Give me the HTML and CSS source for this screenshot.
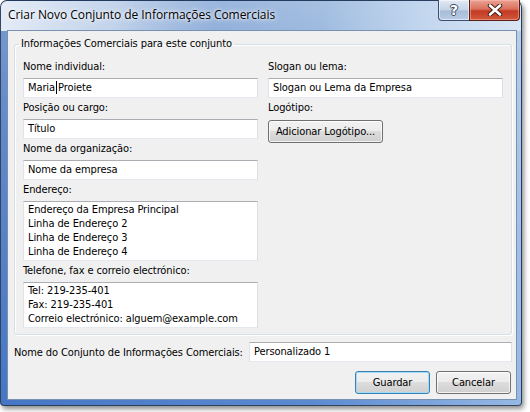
FILE: index.html
```html
<!DOCTYPE html>
<html lang="pt">
<head>
<meta charset="utf-8">
<title>Criar Novo Conjunto de Informações Comerciais</title>
<link rel="stylesheet" href="styles.css">
</head>
<body>
<div class="window">
  <div class="titlebar">
    <div class="title">Criar Novo Conjunto de Informações Comerciais</div>
    <div class="caption-buttons">
      <div class="cap-btn help"><span class="help-glyph">?</span></div>
      <div class="cap-btn close">
        <svg width="16" height="12" viewBox="0 0 16 12">
          <path d="M3 1.5 L13 10.5 M13 1.5 L3 10.5" stroke="#3a1a14" stroke-width="4.4" stroke-linecap="round"/>
          <path d="M3 1.5 L13 10.5 M13 1.5 L3 10.5" stroke="#ffffff" stroke-width="2.6" stroke-linecap="round"/>
        </svg>
      </div>
    </div>
  </div>
  <div class="client">
    <fieldset class="group">
      <legend class="group-title">Informações Comerciais para este conjunto</legend>
      <div class="form-grid">
        <div class="col">
          <div class="label first">Nome individual:</div>
          <div class="textbox">Maria<span class="caret"></span> Proiete</div>
          <div class="label">Posição ou cargo:</div>
          <div class="textbox">Título</div>
          <div class="label">Nome da organização:</div>
          <div class="textbox">Nome da empresa</div>
          <div class="label">Endereço:</div>
          <div class="textarea lines4">Endereço da Empresa Principal<br>Linha de Endereço 2<br>Linha de Endereço 3<br>Linha de Endereço 4</div>
          <div class="label">Telefone, fax e correio electrónico:</div>
          <div class="textarea lines3">Tel: 219-235-401<br>Fax: 219-235-401<br>Correio electrónico: alguem@example.com</div>
        </div>
        <div class="col">
          <div class="label first">Slogan ou lema:</div>
          <div class="textbox">Slogan ou Lema da Empresa</div>
          <div class="label">Logótipo:</div>
          <div class="button logo-btn">Adicionar Logótipo...</div>
        </div>
      </div>
    </fieldset>
    <div class="name-row">
      <div class="label-inline">Nome do Conjunto de Informações Comerciais:</div>
      <div class="textbox name-box">Personalizado 1</div>
    </div>
    <div class="actions">
      <div class="button default">Guardar</div>
      <div class="button">Cancelar</div>
    </div>
  </div>
</div>
</body>
</html>
```

FILE: styles.css
```css
html, body {
  margin: 0;
  padding: 0;
  background: #ffffff;
}
body {
  width: 530px;
  height: 412px;
  overflow: hidden;
  font-family: "DejaVu Sans Condensed", "Liberation Sans", sans-serif;
  font-size: 11px;
  letter-spacing: -0.1px;
  color: #000;
}
.window {
  box-sizing: border-box;
  width: 522px;
  height: 406px;
  border: 1px solid rgba(28, 46, 74, 0.85);
  border-radius: 7px 7px 4px 4px;
  box-shadow: 2px 3px 5px rgba(0, 0, 0, 0.45);
  display: flex;
  flex-direction: column;
  background:
    linear-gradient(100deg, rgba(235,241,249,0.95) 0%, rgba(210,223,240,0.8) 22%, rgba(110,150,205,0) 42%, rgba(130,165,215,0.1) 62%, rgba(205,222,242,0.8) 85%, rgba(222,233,246,0.85) 100%) top / 100% 30px no-repeat,
    linear-gradient(to right, rgba(30,80,175,0.35) 0%, rgba(30,80,175,0) 60%, rgba(200,222,245,0.55) 100%),
    linear-gradient(to bottom, #a9c2e2 0%, #86a9d8 30%, #5a8ad0 100%);
}
.titlebar {
  height: 29px;
  display: flex;
  align-items: flex-start;
  padding-left: 7px;
}
.title {
  font-family: "Open Sans", "Noto Sans", sans-serif;
  font-size: 12px;
  letter-spacing: -0.05px;
  line-height: 28px;
  color: #000;
  text-shadow: 0 0 6px #fff, 0 0 3px #fff;
}
.caption-buttons {
  margin-left: auto;
  margin-right: 1px;
  margin-top: -1px;
  display: flex;
}
.cap-btn {
  box-sizing: border-box;
  height: 21px;
  display: flex;
  align-items: center;
  justify-content: center;
  border: 1px solid #3c4f6e;
  border-top: none;
}
.help {
  width: 31px;
  border-radius: 0 0 0 4px;
  border-right: none;
  background: linear-gradient(to bottom, #e2eaf4 0%, #c4d3e6 50%, #a7bcd8 55%, #b9cce4 100%);
  box-shadow: inset 0 0 0 1px rgba(255,255,255,0.5);
}
.help-glyph {
  font-family: "DejaVu Sans", sans-serif;
  font-weight: bold;
  font-size: 14px;
  line-height: 14px;
  color: #fff;
  text-shadow: -1px 0 #3b4a62, 1px 0 #3b4a62, 0 -1px #3b4a62, 0 1px #3b4a62;
}
.close {
  width: 51px;
  border-radius: 0 0 4px 0;
  border-color: #5a1e16;
  background: linear-gradient(to bottom, #eba393 0%, #d9705c 45%, #c43a24 55%, #d0593c 100%);
  box-shadow: inset 0 0 0 1px rgba(255,200,190,0.45);
}
.client {
  box-sizing: border-box;
  flex: 1;
  margin: 0 4px 5px 6px;
  border: 1px solid #7890b2;
  background: #f0f0f0;
  padding: 6px 4px 0 6px;
  display: flex;
  flex-direction: column;
}
.group {
  margin: 0;
  padding: 0 8px 6px 8px;
  border: 1px solid #d5dfe5;
  border-radius: 3px;
  box-shadow: inset 1px 1px 0 #fff, 1px 1px 0 #fff;
  min-width: 0;
}
.group-title {
  margin-left: -4px;
  padding: 0 2px;
  line-height: 14px;
}
.form-grid {
  display: grid;
  grid-template-columns: 235px 235px;
  column-gap: 10px;
  padding-top: 9px;
}
.col {
  display: flex;
  flex-direction: column;
  align-items: flex-start;
}
.label {
  line-height: 14px;
  margin: 3px 0 4px;
  white-space: nowrap;
}
.label.first {
  margin-top: 0;
}
.textbox, .textarea {
  box-sizing: border-box;
  width: 235px;
  background: #fff;
  border: 1px solid;
  border-color: #abadb3 #dbdfe6 #e3e9ef #e2e3ea;
  padding: 0 4px;
  white-space: nowrap;
}
.textbox {
  height: 20px;
  line-height: 18px;
}
.textarea {
  line-height: 14px;
  padding-top: 1px;
}
.lines4 { height: 60px; }
.lines3 { height: 46px; }
.caret {
  display: inline-block;
  width: 1px;
  height: 13px;
  background: #000;
  vertical-align: -3px;
  margin-left: 1px;
  margin-right: -2px;
}
.button {
  box-sizing: border-box;
  height: 23px;
  width: 75px;
  border: 1px solid #707070;
  border-radius: 3px;
  background: linear-gradient(to bottom, #f2f2f2 0%, #ebebeb 50%, #dddddd 50%, #cfcfcf 100%);
  box-shadow: inset 0 0 0 1px rgba(255,255,255,0.75);
  display: flex;
  align-items: center;
  justify-content: center;
  white-space: nowrap;
}
.logo-btn {
  width: 115px;
  margin-top: 1px;
}
.name-row {
  display: flex;
  align-items: center;
  margin-top: 7px;
}
.label-inline {
  white-space: nowrap;
}
.name-box {
  margin-left: auto;
  width: 263px;
}
.actions {
  display: flex;
  justify-content: flex-end;
  gap: 6px;
  margin-top: 9px;
  padding-right: 1px;
}
.button.default {
  border-color: #3c7fb1;
  box-shadow: inset 0 0 0 1px #9fdcf7;
}
```
